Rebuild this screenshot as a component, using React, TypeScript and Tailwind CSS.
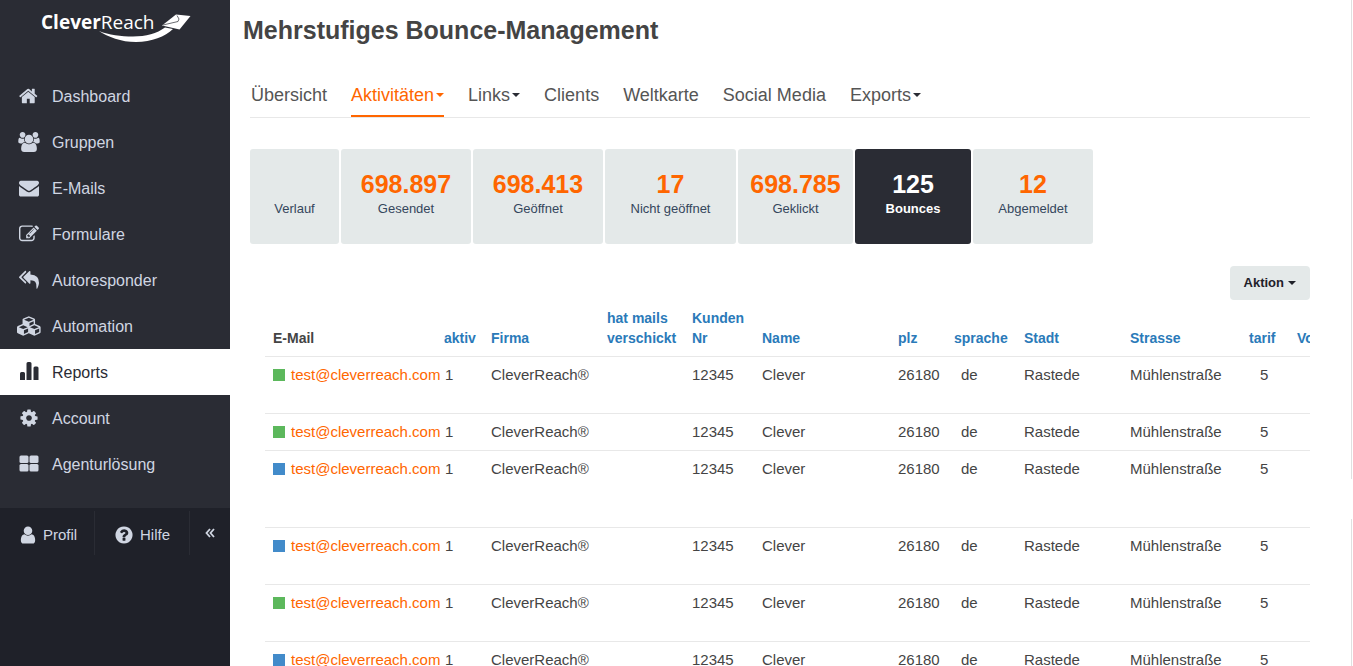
import type { ReactNode } from 'react';

type IconName = 'home' | 'users' | 'mail' | 'edit' | 'reply' | 'cubes' | 'chart' | 'cog' | 'tiles';

const PATHS: Record<string, string> = {
  home: 'M1408 992v480q0 26-19 45t-45 19h-384v-384h-256v384h-384q-26 0-45-19t-19-45v-480q0-1 .5-3t.5-3l575-474 575 474q1 2 1 6zm223-69l-62 74q-8 9-21 11h-3q-13 0-21-7l-692-577-692 577q-12 8-24 7-13-2-21-11l-62-74q-8-10-7-23.5t11-21.5l719-599q32-26 76-26t76 26l244 204v-195q0-14 9-23t23-9h192q14 0 23 9t9 23v408l219 182q10 8 11 21.5t-7 23.5z',
  users:
    'M593 896q-162 5-265 128h-134q-82 0-138-40.5t-56-118.5q0-353 124-353 6 0 43.5 21t97.5 42.5 119 21.5q67 0 133-23-5 37-5 66 0 139 81 256zm1071 637q0 120-73 189.5t-194 69.5h-874q-121 0-194-69.5t-73-189.5q0-53 3.5-103.5t14-109 26.5-108.5 43-97.5 62-81 85.5-53.5 111.5-20q10 0 43 21.5t73 48 107 48 135 21.5 135-21.5 107-48 73-48 43-21.5q61 0 111.5 20t85.5 53.5 62 81 43 97.5 26.5 108.5 14 109 3.5 103.5zm-1024-1277q0 106-75 181t-181 75-181-75-75-181 75-181 181-75 181 75 75 181zm704 384q0 159-112.5 271.5t-271.5 112.5-271.5-112.5-112.5-271.5 112.5-271.5 271.5-112.5 271.5 112.5 112.5 271.5zm576 225q0 78-56 118.500t-138 40.5h-134q-103-123-265-128 81-117 81-256 0-29-5-66 66 23 133 23 59 0 119-21.5t97.5-42.5 43.5-21q124 0 124 353zm-128-609q0 106-75 181t-181 75-181-75-75-181 75-181 181-75 181 75 75 181z',
  mail: 'M1792 710v794q0 66-47 113t-113 47h-1472q-66 0-113-47t-47-113v-794q44 49 101 87 362 246 497 345 57 42 92.5 65.5t94.5 48 110 24.5h2q51 0 110-24.5t94.5-48 92.5-65.5q170-123 498-345 57-39 100-87zm0-294q0 79-49 151t-122 123q-376 261-468 325-10 7-42.5 30.5t-54 38-52 32.5-57.5 27-50 9h-2q-23 0-50-9t-57.5-27-52-32.5-54-38-42.5-30.5q-91-64-262-182.5t-205-142.5q-62-42-117-115.5t-55-136.5q0-78 41.5-130t118.5-52h1472q65 0 112.500 47t47.5 113z',
  edit: 'M888 1184l116-116-152-152-116 116v56h96v96h56zm440-720q-16-16-33 1l-350 350q-17 17-1 33t33-1l350-350q17-17 1-33zm80 594v190q0 119-84.5 203.5t-203.5 84.5h-832q-119 0-203.5-84.5t-84.5-203.5v-832q0-119 84.5-203.5t203.5-84.5h832q63 0 117 25 15 7 18 23 3 17-9 29l-49 49q-14 14-32 8-23-6-45-6h-832q-66 0-113 47t-47 113v832q0 66 47 113t113 47h832q66 0 113-47t47-113v-126q0-13 9-22l64-64q15-15 35-7t20 29zm-96-738l288 288-672 672h-288v-288zm444 132l-92 92-288-288 92-92q28-28 68-28t68 28l152 152q28 28 28 68t-28 68z',
  reply:
    'M640 1082v70q0 42-39 59-13 5-25 5-27 0-45-19l-512-512q-19-19-19-45t19-45l512-512q29-31 70-14 39 17 39 59v69l-397 398q-19 19-19 45t19 45zm1152 58q0 58-17 133.5t-38.5 138-48 125-40.5 90.5l-20 40q-8 17-28 17-6 0-9-1-25-8-23-34 43-400-106-565-64-71-170.500-110.5t-267.5-52.5v251q0 42-39 59-13 5-25 5-27 0-45-19l-512-512q-19-19-19-45t19-45l512-512q29-31 70-14 39 17 39 59v262q411 28 599 221 169 173 169 509z',
  cubes:
    'M640 1632l384-192v-314l-384 164v342zm-64-454l404-173-404-173-404 173zm1088 454l384-192v-314l-384 164v342zm-64-454l404-173-404-173-404 173zm-448-293l384-165v-266l-384 164v267zm-64-379l441-189-441-189-441 189zm1088 518v416q0 36-19 67t-52 47l-448 224q-25 14-57 14t-57-14l-448-224q-4-2-7-4-2 2-7 4l-448 224q-25 14-57 14t-57-14l-448-224q-33-16-52-47t-19-67v-416q0-38 21.5-70t56.5-48l434-186v-400q0-38 21.5-70t56.5-48l448-192q23-10 50-10t50 10l448 192q35 16 56.5 48t21.5 70v400l434 186q36 16 57 48t21 70z',
  cog: 'M1152 896q0-106-75-181t-181-75-181 75-75 181 75 181 181 75 181-75 75-181zm512-109v222q0 12-8 23t-20 13l-185 28q-19 54-39 91 35 50 107 138 10 12 10 25t-9 23q-27 37-99 108t-94 71q-12 0-26-9l-138-108q-44 23-91 38-16 136-29 186-7 28-36 28h-222q-14 0-24.5-8.5t-11.5-21.5l-28-184q-49-16-90-37l-141 107q-10 9-25 9-14 0-25-11-126-114-165-168-7-10-7-23 0-12 8-23 15-21 51-66.5t54-70.5q-27-50-41-99l-183-27q-13-2-21-12.5t-8-23.5v-222q0-12 8-23t19-13l186-28q14-46 39-92-40-57-107-138-10-12-10-24 0-10 9-23 26-36 98.5-107.5t94.5-71.5q13 0 26 10l138 107q44-23 91-38 16-136 29-186 7-28 36-28h222q14 0 24.5 8.5t11.5 21.5l28 184q49 16 90 37l142-107q9-9 24-9 13 0 25 10 129 119 165 170 7 8 7 22 0 12-8 23-15 21-51 66.5t-54 70.5q26 50 41 98l183 28q13 2 21 12.5t8 23.5z',
  user: 'M1536 1399q0 109-62.5 187t-150.5 78h-854q-88 0-150.5-78t-62.5-187q0-85 8.5-160.5t31.5-152 58.5-131 94-89 134.5-34.5q131 128 313 128t313-128q76 0 134.5 34.5t94 89 58.5 131 31.5 152 8.5 160.5zm-256-887q0 159-112.5 271.5t-271.5 112.5-271.5-112.5-112.5-271.5 112.5-271.5 271.5-112.5 271.5 112.5 112.5 271.5z',
  help: 'M1024 1376v-192q0-14-9-23t-23-9h-192q-14 0-23 9t-9 23v192q0 14 9 23t23 9h192q14 0 23-9t9-23zm256-672q0-88-55.5-163t-138.5-116-170-41q-243 0-371 213-15 24 8 42l132 100q7 6 19 6 16 0 25-12 53-68 86-92 34-24 86-24 48 0 85.5 26t37.5 59q0 38-20 61t-68 45q-63 28-115.5 86.5t-52.5 125.5v36q0 14 9 23t23 9h192q14 0 23-9t9-23q0-19 21.5-49.5t54.5-49.5q32-18 49-28.5t46-35 44.5-48 28-60.5 12.5-81zm384 192q0 209-103 385.5t-279.5 279.5-385.5 103-385.5-103-279.5-279.5-103-385.5 103-385.5 279.5-279.5 385.5-103 385.5 103 279.5 279.5 103 385.500z',
};

function Glyph({ name, viewBox = '0 0 1792 1792', className }: { name: string; viewBox?: string; className: string }) {
  return (
    <svg viewBox={viewBox} className={className} fill="currentColor" aria-hidden="true">
      <path d={PATHS[name]} />
    </svg>
  );
}

function NavIcon({ name }: { name: IconName }) {
  switch (name) {
    case 'users':
      return <Glyph name="users" viewBox="0 0 1920 1792" className="h-5 w-[22px]" />;
    case 'cubes':
      return <Glyph name="cubes" viewBox="0 0 2304 1792" className="h-5 w-[25px]" />;
    case 'chart':
      return (
        <svg viewBox="0 0 20 20" className="size-5" fill="currentColor" aria-hidden="true">
          <path d="M1 18v-6.500q0-1.500 1.500-1.500h2q1.500 0 1.500 1.500v6.500zM7.500 18v-16.500q0-1.500 1.500-1.500h2q1.500 0 1.500 1.500v16.500zM14.500 18v-12q0-1.500 1.500-1.500h2q1.500 0 1.500 1.500v12z" />
        </svg>
      );
    case 'tiles':
      return (
        <svg viewBox="0 0 20 20" className="size-5" fill="currentColor" aria-hidden="true">
          <rect x="0.500" y="1.500" width="9" height="7.500" rx="1.500" />
          <rect x="10.500" y="1.500" width="9" height="7.500" rx="1.500" />
          <rect x="0.500" y="10" width="9" height="7.500" rx="1.500" />
          <rect x="10.500" y="10" width="9" height="7.500" rx="1.500" />
        </svg>
      );
    default:
      return <Glyph name={name} className="size-5" />;
  }
}

const NAV: { label: string; icon: IconName; active?: boolean }[] = [
  { label: 'Dashboard', icon: 'home' },
  { label: 'Gruppen', icon: 'users' },
  { label: 'E-Mails', icon: 'mail' },
  { label: 'Formulare', icon: 'edit' },
  { label: 'Autoresponder', icon: 'reply' },
  { label: 'Automation', icon: 'cubes' },
  { label: 'Reports', icon: 'chart', active: true },
  { label: 'Account', icon: 'cog' },
  { label: 'Agenturlösung', icon: 'tiles' },
];

const TABS = [
  { label: 'Übersicht' },
  { label: 'Aktivitäten', menu: true, active: true },
  { label: 'Links', menu: true },
  { label: 'Clients' },
  { label: 'Weltkarte' },
  { label: 'Social Media' },
  { label: 'Exports', menu: true },
];

const CARDS = [
  { value: '', label: 'Verlauf', width: 'w-[89px]' },
  { value: '698.897', label: 'Gesendet', width: 'w-[130px]' },
  { value: '698.413', label: 'Geöffnet', width: 'w-[130px]' },
  { value: '17', label: 'Nicht geöffnet', width: 'w-[131px]' },
  { value: '698.785', label: 'Geklickt', width: 'w-[115px]' },
  { value: '125', label: 'Bounces', width: 'w-[116px]', active: true },
  { value: '12', label: 'Abgemeldet', width: 'w-[120px]' },
];

const COLUMNS: { label: ReactNode; width: string }[] = [
  { label: 'aktiv', width: 'w-[47px]' },
  { label: 'Firma', width: 'w-[116px]' },
  { label: <>hat mails<br />verschickt</>, width: 'w-[85px]' },
  { label: <>Kunden<br />Nr</>, width: 'w-[70px]' },
  { label: 'Name', width: 'w-[136px]' },
  { label: 'plz', width: 'w-[56px]' },
  { label: 'sprache', width: 'w-[70px]' },
  { label: 'Stadt', width: 'w-[106px]' },
  { label: 'Strasse', width: 'w-[119px]' },
  { label: 'tarif', width: 'w-[48px]' },
  { label: 'Vorname', width: 'w-[100px]' },
];

const ROWS = [
  { color: 'bg-[#5cb85c]', height: 'h-[57px]' },
  { color: 'bg-[#5cb85c]', height: 'h-[37px]' },
  { color: 'bg-[#428bca]', height: 'h-[77px]' },
  { color: 'bg-[#428bca]', height: 'h-[57px]' },
  { color: 'bg-[#5cb85c]', height: 'h-[57px]' },
  { color: 'bg-[#428bca]', height: 'h-[57px]' },
];

function Caret() {
  return <span className="inline-block border-x-4 border-t-4 border-x-transparent border-t-current" />;
}

function Logo() {
  return (
    <svg viewBox="0 0 150 36" className="h-9 w-[150px]" fill="#fff" role="img" aria-label="CleverReach">
      <text x="0" y="21" fontSize="19" fontFamily="'Open Sans', 'Noto Sans', sans-serif">
        <tspan fontWeight="700">Clever</tspan>
        <tspan>Reach</tspan>
      </text>
      <path d="M58 23C68 27 80 28.500 92 28.500C105 28.500 116 25.500 124 19.500L132 21C124 28.500 111 34 95 34C80 34 67 29 58 23Z" />
      <path d="M121 17.500L135 6.500L149.500 8L138.500 21.500Z" />
      <path d="M122 17L137 13.500L138 11L136 7.500" fill="none" stroke="#2a2c34" strokeWidth="0.700" />
    </svg>
  );
}

function Sidebar() {
  return (
    <aside className="flex w-[230px] shrink-0 flex-col bg-[#1f2129] text-[#d0d6e2]">
      <div className="bg-[#2a2c34] pb-[21px]">
        <div className="flex h-[73px] items-start pt-2 pl-[41px]">
          <a href="#start"><Logo /></a>
        </div>
        <nav>
          {NAV.map((item) => (
            <a
              key={item.label}
              href={`#${item.label}`}
              className={`flex h-[46px] items-center gap-[10px] pl-4 text-[16px] ${item.active ? 'bg-white text-[#2a2c34]' : ''}`}
            >
              <span className="flex w-[26px] justify-center"><NavIcon name={item.icon} /></span>
              <span className="pt-0.5">{item.label}</span>
            </a>
          ))}
        </nav>
      </div>
      <div className="flex pt-[3px] text-[15px]">
        <a href="#profil" className="flex h-11 w-[95px] items-center gap-[5px] border-r border-[#2a2c34] pt-1 pl-[18px]">
          <Glyph name="user" className="size-5" />
          Profil
        </a>
        <a href="#hilfe" className="flex h-11 w-[95px] items-center gap-[6px] border-r border-[#2a2c34] pt-1 pl-[19px]">
          <Glyph name="help" className="size-5" />
          Hilfe
        </a>
        <button type="button" aria-label="Menü einklappen" className="flex h-11 grow items-center justify-center">
          <svg viewBox="0 0 10 10" className="size-[10px]" fill="none" stroke="currentColor" strokeWidth="1.800" aria-hidden="true">
            <path d="M5 1L1.500 5L5 9M9 1L5.500 5L9 9" />
          </svg>
        </button>
      </div>
    </aside>
  );
}

function ReportTable() {
  return (
    <div className="ml-[15px] overflow-hidden">
      <table className="w-[1132px] table-fixed border-collapse text-left text-[15px] leading-5 text-[#444]">
        <thead>
          <tr className="h-14 align-bottom text-[14px] text-[#2a7ab9]">
            <th className="w-[179px] border-b border-[#e8e8e8] pb-2 pl-2 font-bold text-[#444]">E-Mail</th>
            {COLUMNS.map((column, i) => (
              <th key={i} className={`${column.width} border-b border-[#e8e8e8] p-0 pb-2 font-bold`}>
                <a href="#sort">{column.label}</a>
              </th>
            ))}
          </tr>
        </thead>
        <tbody>
          {ROWS.map((row, i) => (
            <tr key={i} className={`${row.height} border-b border-[#e8e8e8] align-top *:p-0 *:pt-2`}>
              <td>
                <div className="flex items-center gap-[6px] pl-2 whitespace-nowrap">
                  <span className={`size-3 shrink-0 ${row.color}`} />
                  <a href="mailto:test@cleverreach.com" className="text-[#ff6600]">test@cleverreach.com</a>
                </div>
              </td>
              <td><span className="pl-px">1</span></td>
              <td>CleverReach®</td>
              <td />
              <td>12345</td>
              <td>Clever</td>
              <td>26180</td>
              <td><span className="pl-[7px]">de</span></td>
              <td>Rastede</td>
              <td>Mühlenstraße</td>
              <td><span className="pl-[11px]">5</span></td>
              <td />
            </tr>
          ))}
        </tbody>
      </table>
    </div>
  );
}

export default function App() {
  return (
    <div className="flex h-screen overflow-hidden bg-white font-['Liberation_Sans',Arial,sans-serif]">
      <Sidebar />
      <main className="flex min-w-0 grow flex-col pr-[41px] pl-5">
        <h1 className="-ml-[7px] pt-[14px] text-[25px] leading-8 font-bold text-[#444]">Mehrstufiges Bounce-Management</h1>
        <nav className="mt-[31px] flex gap-6 border-b border-[#e8e8e8] pl-px text-[18px] text-[#555]">
          {TABS.map((tab) => (
            <a
              key={tab.label}
              href={`#${tab.label}`}
              className={`flex h-10 items-center gap-0.5 border-b-2 pb-0.5 ${tab.active ? 'border-[#ff6600] text-[#ff6600]' : 'border-transparent'}`}
            >
              {tab.label}
              {tab.menu && <span className={`flex ${tab.active ? '' : 'text-[#2a2c34]'}`}><Caret /></span>}
            </a>
          ))}
        </nav>
        <div className="mt-[31px] flex gap-[2px]">
          {CARDS.map((card) => (
            <a
              key={card.label}
              href={`#${card.label}`}
              className={`flex h-[95px] flex-col items-center rounded-[3px] pt-[19px] ${card.width} ${card.active ? 'bg-[#2a2c34] font-bold text-white' : 'bg-[#e4e9e9] text-[#34465c]'}`}
            >
              <span className={`h-8 text-[25px] leading-8 font-bold ${card.active ? 'text-white' : 'text-[#ff6600]'}`}>{card.value}</span>
              <span className="text-[13px] leading-[18px]">{card.label}</span>
            </a>
          ))}
        </div>
        <div className="mt-[22px] flex justify-end">
          <button type="button" className="flex h-[34px] items-center gap-1 rounded-[4px] bg-[#e4e9e9] px-[14px] text-[13px] font-bold text-[#1f2129]">
            Aktion <Caret />
          </button>
        </div>
        <ReportTable />
      </main>
      <div className="flex w-0.5 shrink-0 flex-col gap-10" aria-hidden="true">
        <div className="h-[479px] border-l border-[#e0e0e0]" />
        <div className="grow border-l border-[#e0e0e0]" />
      </div>
    </div>
  );
}
